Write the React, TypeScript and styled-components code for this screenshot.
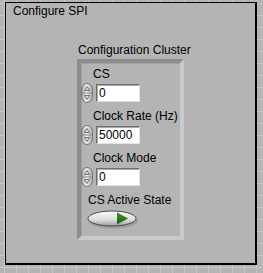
import * as React from 'react'
import styled, { createGlobalStyle } from 'styled-components'

const Global = createGlobalStyle`
  html, body {
    margin: 0;
    padding: 0;
  }
  body {
    width: 263px;
    height: 273px;
    overflow: hidden;
    font-family: "Liberation Sans", Arial, sans-serif;
    font-size: 12px;
    color: #000;
    background-color: #b4b4b4;
    background-image:
      linear-gradient(to right, #c7c7c7 1px, transparent 1px),
      linear-gradient(to bottom, #c7c7c7 1px, transparent 1px);
    background-size: 12px 12px;
    background-position: 4px 3px;
  }
`

const Page = styled.div`
  width: 263px;
  height: 273px;
  padding: 2px 0 0 5px;
  box-sizing: border-box;
`

const Panel = styled.div`
  width: 252px;
  height: 263px;
  box-sizing: border-box;
  border: 2px solid #000;
  border-top-width: 1px;
  border-left-width: 1px;
  background: #b4b4b4;
  padding: 1px 0 0 7px;
  display: flex;
  flex-direction: column;
`

const Title = styled.div`
  line-height: 14px;
  height: 14px;
`

const ClusterWrap = styled.div`
  margin: 25px 0 0 64px;
  display: flex;
  flex-direction: column;
  align-items: flex-start;
`

const ClusterLabel = styled.div`
  line-height: 14px;
  height: 14px;
  margin-left: 1px;
  white-space: nowrap;
`

const Frame = styled.div`
  margin-top: 2px;
  width: 107px;
  box-sizing: border-box;
  border: 4px solid;
  border-color: #8d8d8d #cacaca #cacaca #8d8d8d;
  box-shadow: inset 1px 1px 0 #a2a2a2;
  padding: 4px 0 7px 0;
  display: flex;
  flex-direction: column;
  align-items: flex-start;
`

const Label = styled.div<{ $indent: number }>`
  line-height: 14px;
  height: 14px;
  margin-left: ${p => p.$indent}px;
  white-space: nowrap;
`

const NumRow = styled.div`
  margin: 3px 0 7px 0;
  display: flex;
  align-items: center;
  gap: 3px;
  height: 18px;
`

const NumBox = styled.div`
  width: 44px;
  height: 18px;
  box-sizing: border-box;
  background: #fff;
  border: 1px solid;
  border-color: #6f6f6f #e2e2e2 #e2e2e2 #6f6f6f;
  box-shadow: inset 1px 1px 0 #a8a8a8;
  padding: 0 0 0 2px;
  line-height: 16px;
`

const Spinner = () => (
  <svg width="12" height="20" viewBox="0 0 12 20">
    <defs>
      <linearGradient id="spg" x1="0" x2="1" y1="0" y2="0">
        <stop offset="0" stopColor="#9a9a9a" />
        <stop offset="0.45" stopColor="#f2f2f2" />
        <stop offset="1" stopColor="#a4a4a4" />
      </linearGradient>
    </defs>
    <rect x="0.5" y="0.5" width="11" height="19" rx="5.5" ry="6" fill="url(#spg)" stroke="#767676" />
    <line x1="1" y1="10" x2="11" y2="10" stroke="#8a8a8a" />
    <path d="M6 3.5 L8.5 7.5 L3.5 7.5 Z" fill="#d8d8d8" stroke="#5a5a5a" strokeWidth="0.8" />
    <path d="M6 16.5 L8.5 12.5 L3.5 12.5 Z" fill="#d8d8d8" stroke="#5a5a5a" strokeWidth="0.8" />
  </svg>
)

const Numeric = ({ value }: { value: string }) => (
  <NumRow>
    <Spinner />
    <NumBox>{value}</NumBox>
  </NumRow>
)

const BoolButton = styled.div`
  margin: 3px 0 0 6px;
  width: 52px;
  height: 19px;
`

const Switch = () => (
  <svg width="52" height="19" viewBox="0 0 52 19">
    <defs>
      <linearGradient id="btg" x1="0" x2="0" y1="0" y2="1">
        <stop offset="0" stopColor="#fbfbfb" />
        <stop offset="0.6" stopColor="#dcdcdc" />
        <stop offset="1" stopColor="#9c9c9c" />
      </linearGradient>
    </defs>
    <ellipse cx="26" cy="10.5" rx="25" ry="8" fill="#8e8e8e" opacity="0.6" />
    <ellipse cx="25" cy="8.5" rx="24" ry="7.5" fill="url(#btg)" stroke="#4a4a4a" strokeWidth="1" />
    <path d="M30 2.5 L41 8.5 L30 14.5 Z" fill="#2a6e1c" />
    <path d="M30 2.5 L41 8.5 L30 8.5 Z" fill="#3f9a2a" opacity="0.5" />
  </svg>
)

export default function App() {
  return (
    <>
      <Global />
      <Page>
        <Panel>
          <Title>Configure SPI</Title>
          <ClusterWrap>
            <ClusterLabel>Configuration Cluster</ClusterLabel>
            <Frame>
              <Label $indent={12}>CS</Label>
              <Numeric value="0" />
              <Label $indent={12}>Clock Rate (Hz)</Label>
              <Numeric value="50000" />
              <Label $indent={12}>Clock Mode</Label>
              <Numeric value="0" />
              <Label $indent={7}>CS Active State</Label>
              <BoolButton>
                <Switch />
              </BoolButton>
            </Frame>
          </ClusterWrap>
        </Panel>
      </Page>
    </>
  )
}
